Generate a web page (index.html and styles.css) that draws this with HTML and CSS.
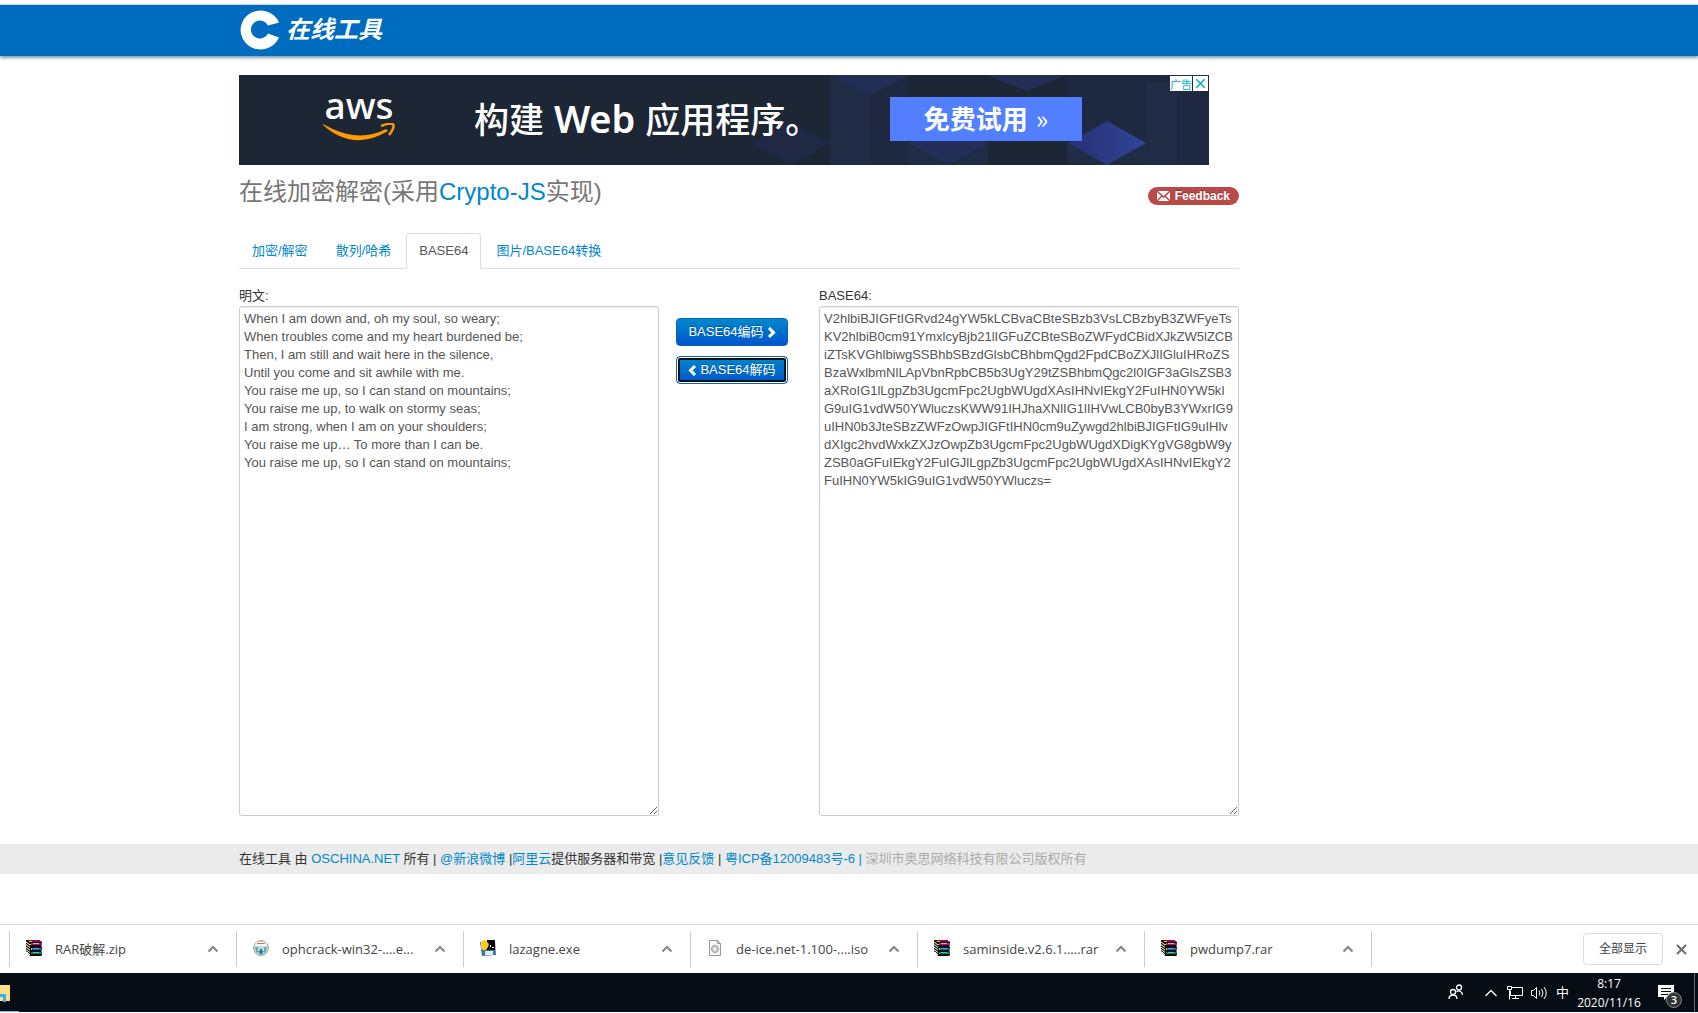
FILE: index.html
```html
<!DOCTYPE html>
<html lang="zh-CN">
<head>
<meta charset="utf-8">
<title>在线加密解密</title>
<link rel="stylesheet" href="styles.css">
</head>
<body>
<svg class="sprite" aria-hidden="true">
  <symbol id="rar" viewBox="0 0 16 16">
    <path fill="#111" d="M0 0h13l3 2v3l-1 1 1 1v3l-1 1 1 1v3l-1 1H4L0 11z"/>
    <path fill="#801040" d="M1 0h12l2 2H5z"/><path fill="#b01868" d="M5 3h11v2H5z"/><path fill="#e8a0c8" d="M7 3h6v1H7z"/>
    <path fill="#1460a8" d="M5 8h11v2H5z"/><path fill="#58a8e0" d="M7 8h6v1H7z"/>
    <path fill="#0e8058" d="M5 12h11v2H5z"/><path fill="#50c898" d="M7 12h6v1H7z"/>
    <path stroke="#fff" fill="none" d="M0 2l4 3M0 4.500l4 3M0 7l4 3M0 9.500l4 3M1 12l3 3"/>
    <path fill="#e8c020" d="M3 1h3v1H3zM4 4h1v1H4zM5 8h1v2H5z"/>
  </symbol>
  <symbol id="up" viewBox="0 0 12 8"><path d="M1.500 6.500L6 2l4.500 4.500" fill="none" stroke="currentColor" stroke-width="2"/></symbol>
</svg>

<header class="topbar">
  <div class="container">
    <a class="logo" href="#">
      <svg width="40" height="40" viewBox="0 0 40 40" aria-hidden="true"><path fill="#fff" d="M39 12.500A20 19.500 0 1 0 39 27.500L28 23.500A9 9 0 1 1 28 15.500z"/></svg>
      <span>在线工具</span>
    </a>
  </div>
</header>

<main class="container">
  <section class="ad">
    <svg class="ad-art" viewBox="0 0 970 90" preserveAspectRatio="none" aria-hidden="true">
      <defs>
        <linearGradient id="g1" x2="0" y2="1"><stop stop-color="#232f4d"/><stop offset="1" stop-color="#1e2a3d"/></linearGradient>
        <linearGradient id="g2" x2="1" y2="0"><stop stop-color="#272f73"/><stop offset="1" stop-color="#304595"/></linearGradient>
      </defs>
      <path fill="#1e2941" d="M591 0h79v90h-79zM828 0h80v68l-40-22-40 22zM908 0h62v90h-62z"/>
      <path fill="#202b45" d="M591 0h39v90h-39zM670 68h79v22h-79zM908 8h30v82h-30z"/>
      <path fill="#222e56" d="M591 0h79l-40 20zM748 0h80l-40 16zM925 0h45v8z"/>
      <path fill="#1f2944" d="M512 68l39-22 40 22-40 22z"/>
      <path fill="#242f59" d="M670 68l40-22 40 22-40 22z"/>
      <path fill="url(#g1)" d="M828 68l40 22h-40zM908 68l-40 22h40z"/>
      <path fill="url(#g2)" d="M829 68l39-22 39 22-39 22z"/>
    </svg>
    <div class="aws">
      <span>aws</span>
      <svg width="72" height="18" viewBox="0 0 72 18" aria-hidden="true"><path fill="#f90" d="M0 1Q34 21 63 6L65 8Q30 29 0 2z"/><path d="M58 3Q69-1 70.500 2Q71 6 66 12" fill="none" stroke="#f90" stroke-width="2.500"/></svg>
    </div>
    <strong class="slogan">构建 <b>Web</b> 应用程序。</strong>
    <a class="try" href="#">免费试用 <span>»</span></a>
    <div class="ad-choice"><a href="#">广告</a><button aria-label="关闭广告"><svg width="9" height="9" viewBox="0 0 9 9"><path d="M0 0l9 9M9 0L0 9" stroke="#00aecd" stroke-width="1.500"/></svg></button></div>
  </section>

  <div class="heading">
    <h1>在线加密解密(采用<a href="#">Crypto-JS</a>实现)</h1>
    <a class="feedback" href="#"><svg width="13" height="10" viewBox="0 0 13 10" aria-hidden="true"><path fill="#fff" d="M1 0h11L6.500 5zM0 1l4 4-4 4zM13 1L9 5l4 4zM5 6l1.500 1L8 6l4 4H1z"/></svg>Feedback</a>
  </div>

  <nav class="tabs">
    <a href="#">加密/解密</a>
    <a href="#">散列/哈希</a>
    <a class="active" href="#">BASE64</a>
    <a href="#">图片/BASE64转换</a>
  </nav>

  <form class="workspace">
    <div class="field">
      <label for="plain">明文:</label>
      <textarea id="plain" spellcheck="false">When I am down and, oh my soul, so weary;
When troubles come and my heart burdened be;
Then, I am still and wait here in the silence,
Until you come and sit awhile with me.
You raise me up, so I can stand on mountains;
You raise me up, to walk on stormy seas;
I am strong, when I am on your shoulders;
You raise me up… To more than I can be.
You raise me up, so I can stand on mountains;</textarea>
    </div>
    <div class="actions">
      <button type="button">BASE64编码 <svg width="9" height="11" viewBox="0 0 9 11" aria-hidden="true"><path d="M2 1l4.500 4.500L2 10" fill="none" stroke="#fff" stroke-width="3"/></svg></button>
      <button type="button" class="focused"><svg width="9" height="11" viewBox="0 0 9 11" aria-hidden="true"><path d="M7 1L2.500 5.500 7 10" fill="none" stroke="#fff" stroke-width="3"/></svg> BASE64解码</button>
    </div>
    <div class="field">
      <label for="code">BASE64:</label>
      <textarea id="code" spellcheck="false">V2hlbiBJIGFtIGRvd24gYW5kLCBvaCBteSBzb3VsLCBzbyB3ZWFyeTsKV2hlbiB0cm91YmxlcyBjb21lIGFuZCBteSBoZWFydCBidXJkZW5lZCBiZTsKVGhlbiwgSSBhbSBzdGlsbCBhbmQgd2FpdCBoZXJlIGluIHRoZSBzaWxlbmNlLApVbnRpbCB5b3UgY29tZSBhbmQgc2l0IGF3aGlsZSB3aXRoIG1lLgpZb3UgcmFpc2UgbWUgdXAsIHNvIEkgY2FuIHN0YW5kIG9uIG1vdW50YWluczsKWW91IHJhaXNlIG1lIHVwLCB0byB3YWxrIG9uIHN0b3JteSBzZWFzOwpJIGFtIHN0cm9uZywgd2hlbiBJIGFtIG9uIHlvdXIgc2hvdWxkZXJzOwpZb3UgcmFpc2UgbWUgdXDigKYgVG8gbW9yZSB0aGFuIEkgY2FuIGJlLgpZb3UgcmFpc2UgbWUgdXAsIHNvIEkgY2FuIHN0YW5kIG9uIG1vdW50YWluczs=</textarea>
    </div>
  </form>
</main>

<footer class="footer">
  <div class="container">在线工具 由 <a href="#">OSCHINA.NET</a> 所有 | <a href="#">@新浪微博</a> |<a href="#">阿里云</a>提供服务器和带宽 |<a href="#">意见反馈</a> | <a href="#">粤ICP备12009483号-6 |</a> <span class="owner">深圳市奥思网络科技有限公司版权所有</span></div>
</footer>

<section class="downloads">
  <ul>
    <li><svg class="ico"><use href="#rar"/></svg><span>RAR破解.zip</span><button aria-label="更多"><svg><use href="#up"/></svg></button></li>
    <li><svg class="ico" viewBox="0 0 16 16"><circle cx="8" cy="8" r="7.500" fill="#d4dcd8" stroke="#9aa8a4"/><path fill="#f6f2f0" d="M3 2h10l1 4H2z"/><path fill="#cc7468" d="M4 3h8v1H4z"/><path fill="#6cac9c" d="M2 7h12l-1 5-5 3-5-3z"/><path fill="#b8d8ec" d="M5 7h6v6H5z"/><path fill="#1c70c0" d="M7 9h2v2h2l-3 3-3-3h2z"/></svg><span>ophcrack-win32-....e...</span><button aria-label="更多"><svg><use href="#up"/></svg></button></li>
    <li><svg class="ico" viewBox="0 0 16 16"><path fill="#3878b0" d="M0 2l15-1 1 14-14 1z"/><path fill="#050505" d="M7 0h8v10H6z"/><path fill="#f8cc20" d="M1 2q4-4 6 0l2 2-1 3-2 3H3L1 8z"/><path fill="#e8e8e8" d="M5 11h8v4H5z"/><path fill="#fff" d="M10 5h1v2h-1zM12 7h2v1h-2z"/></svg><span>lazagne.exe</span><button aria-label="更多"><svg><use href="#up"/></svg></button></li>
    <li><svg class="ico" viewBox="0 0 16 16"><path fill="#f6f6f6" stroke="#999" d="M2.500.5h8l3 3v12h-11z"/><path fill="none" stroke="#999" d="M10.500.5v3h3"/><circle cx="8" cy="9" r="3.500" fill="#d4d4d4" stroke="#999"/><circle cx="8" cy="9" r="1" fill="#fff"/></svg><span>de-ice.net-1.100-....iso</span><button aria-label="更多"><svg><use href="#up"/></svg></button></li>
    <li><svg class="ico"><use href="#rar"/></svg><span>saminside.v2.6.1.....rar</span><button aria-label="更多"><svg><use href="#up"/></svg></button></li>
    <li><svg class="ico"><use href="#rar"/></svg><span>pwdump7.rar</span><button aria-label="更多"><svg><use href="#up"/></svg></button></li>
  </ul>
  <button class="show-all">全部显示</button>
  <button class="close" aria-label="关闭"><svg width="11" height="11" viewBox="0 0 11 11"><path d="M1 1l9 9M10 1l-9 9" stroke="#6b6e72" stroke-width="2"/></svg></button>
</section>

<div class="taskbar">
  <div class="folder"><svg width="10" height="17" viewBox="0 0 10 17" aria-hidden="true"><path fill="#ffe08a" d="M0 0h10v16H0z"/><path fill="#35b0ea" d="M0 9h6v8H3v-5H0z"/></svg></div>
  <div class="tray">
    <svg class="people" width="16" height="17" viewBox="0 0 16 17" fill="none" stroke="#fff" stroke-width="1.300"><circle cx="5" cy="8" r="2.500"/><path d="M1 15q0-4 4-4t4 4"/><circle cx="11" cy="3.500" r="2.500"/><path d="M8.500 8q2-2 4-.5 2 1 2 3.500"/></svg>
    <svg class="more" width="12" height="8" viewBox="0 0 12 8"><path d="M.5 7L6 1.500 11.500 7" fill="none" stroke="#fff" stroke-width="1.300"/></svg>
    <svg class="net" width="17" height="15" viewBox="0 0 17 15" fill="none" stroke="#fff"><path d="M5.500 2.500h11v8h-12v-5M1.500 1.500h4v3h-4zM3.500 4.500v10M6 13.500h7M9.500 10.500v3"/></svg>
    <svg class="vol" width="17" height="14" viewBox="0 0 17 14" fill="none" stroke="#fff"><path d="M.5 4.500h2l3-3v11l-3-3h-2zM8 4.500q2 2.500 0 5M10.500 3q3 4 0 8M13 1q4.500 6 0 12"/></svg>
    <span class="ime">中</span>
    <time><span>8:17</span><span>2020/11/16</span></time>
    <div class="notes"><svg width="16" height="16" viewBox="0 0 16 16" aria-hidden="true"><path fill="#fff" d="M0 0h16v12H9l-3 3v-3H0z"/><path stroke="#060c14" d="M3 3.500h10M3 6.500h10M3 9.500h7"/></svg><span class="count">3</span></div>
    <i class="edge"></i>
  </div>
</div>
</body>
</html>
```
FILE: styles.css
```css
* { box-sizing: border-box; }
body {
  margin: 0;
  padding-top: 4px;
  background: #fff;
  color: #333;
  font: 13px/18px "Liberation Sans", "Noto Sans CJK SC", sans-serif;
}
a { color: #08c; text-decoration: none; }
button { font: inherit; cursor: pointer; }
svg { display: block; flex: none; }
.sprite { display: none; }

.container {
  max-width: 1000px;
  margin-left: max(0px, calc(50% - 610px));
}

.topbar {
  height: 52px;
  border-top: 1px solid #ccd6de;
  background: #006cbf;
  box-shadow: 0 2px 3px rgba(0, 60, 100, .5);
}
.logo { display: flex; align-items: center; gap: 6px; padding: 5px 0 0 1px; }
.logo span { color: #fff; font-size: 24px; line-height: 40px; font-style: italic; font-weight: 700; }

.ad {
  position: relative;
  display: flex;
  align-items: flex-start;
  max-width: 970px;
  height: 90px;
  margin-top: 19px;
  background: #1d2635;
  color: #fff;
}
.ad > * { position: relative; flex: none; }
.ad .ad-art { position: absolute; inset: 0; width: 100%; height: 100%; }
.aws { width: 72px; margin: 14px 0 0 84px; text-align: center; }
.aws span { display: block; margin-bottom: 2px; font: 500 37px/32px "Noto Sans", sans-serif; }
.slogan { margin: 18px 0 0 79px; font: 500 35px/50px "Noto Sans CJK SC", sans-serif; }
.slogan b { margin: 0 2px; font: 600 38px/50px "Noto Sans", sans-serif; }
.try {
  display: flex;
  justify-content: center;
  gap: 8px;
  width: 192px;
  height: 44px;
  margin: 22px 127px 0 auto;
  background: #527fff;
  color: #fff;
  font: 700 26px/42px "Noto Sans CJK SC", sans-serif;
}
.try span { font-weight: 400; }
.ad .ad-choice { position: absolute; top: 1px; right: 1px; display: flex; gap: 1px; }
.ad-choice a, .ad-choice button {
  display: grid;
  place-items: center;
  height: 15px;
  padding: 0;
  border: 0;
  background: #fff;
  color: #00aecd;
  font-size: 11px;
}
.ad-choice a { width: 22px; }
.ad-choice button { width: 15px; }

.heading { display: flex; justify-content: space-between; align-items: center; height: 54px; }
h1 { margin: 0; color: #777; font-size: 24px; line-height: 36px; font-weight: 400; }
.feedback {
  display: flex;
  align-items: center;
  gap: 5px;
  margin-top: 8px;
  padding: 2px 9px;
  border-radius: 9px;
  background: #b94a48;
  color: #fff;
  font-size: 12px;
  line-height: 14px;
  font-weight: 700;
  text-shadow: 0 -1px 0 rgba(0, 0, 0, .25);
}

.tabs { display: flex; gap: 2px; margin-top: 14px; border-bottom: 1px solid #ddd; }
.tabs a {
  margin-bottom: -1px;
  padding: 8px 12px;
  border: 1px solid transparent;
  border-radius: 4px 4px 0 0;
}
.tabs .active { border-color: #ddd #ddd #fff; background: #fff; color: #555; }

.workspace { display: grid; grid-template-columns: 420px 1fr 420px; margin-top: 18px; }
.field label { display: block; height: 19px; }
.field textarea {
  display: block;
  width: 100%;
  height: 510px;
  padding: 3px 4px;
  border: 1px solid #ccc;
  border-radius: 3px;
  background: #fff;
  box-shadow: inset 0 1px 1px rgba(0, 0, 0, .075);
  color: #555;
  font: inherit;
  overflow: auto;
  outline: 0;
}
.actions { display: flex; flex-direction: column; align-items: flex-start; gap: 10px; padding: 31px 0 0 17px; }
.actions button {
  display: flex;
  align-items: center;
  justify-content: center;
  gap: 3px;
  width: 112px;
  height: 28px;
  padding: 0;
  border: 1px solid #0066c0;
  border-radius: 4px;
  background: linear-gradient(#08c, #05c);
  color: #fff;
  text-shadow: 0 -1px 0 rgba(0, 0, 0, .25);
}
.actions .focused { box-shadow: inset 0 0 0 1px #fff, inset 0 0 0 3px #101010; }

.footer { margin-top: 28px; padding: 6px 0; background: #ebebeb; }
.owner { color: #aaa; }

.downloads {
  display: flex;
  align-items: center;
  height: 49px;
  margin-top: 50px;
  border-top: 1px solid #dadce0;
  background: #fff;
  color: #444;
}
.downloads ul {
  display: flex;
  margin: 0 auto 0 9px;
  padding: 0;
  border-left: 1px solid #ccc;
  list-style: none;
  font: 13px/18px "Open Sans", "Noto Sans CJK SC", sans-serif;
}
.downloads li { display: flex; align-items: center; width: 227px; height: 36px; padding: 0 17px 0 16px; border-right: 1px solid #ccc; }
.downloads li span { flex: 1; margin-left: 13px; white-space: nowrap; }
.ico { width: 16px; height: 16px; margin-bottom: 2px; }
.downloads li button { padding: 0; border: 0; background: none; color: #80868b; }
.downloads li button svg { width: 12px; height: 8px; }
.show-all { width: 80px; height: 32px; padding: 0; border: 1px solid #dadce0; border-radius: 4px; background: #fff; color: #3c4043; font-size: 12px; }
.close { margin: 0 11px 0 13px; padding: 0; border: 0; background: none; }

.taskbar { display: flex; justify-content: space-between; height: 39px; overflow: hidden; background: #060c14; color: #fff; }
.folder { width: 19px; padding-top: 12px; border-bottom: 1px solid #76b9ed; }
.tray { display: flex; align-items: center; }
.more { margin-left: 21px; }
.net { margin-left: 9px; }
.vol { margin-left: 8px; }
.ime { margin-left: 8px; font-size: 13px; }
time { display: flex; flex-direction: column; align-items: center; width: 68px; margin-left: 6px; font: 12px/19px "Open Sans", sans-serif; }
.notes { position: relative; margin-left: 15px; }
.count {
  position: absolute;
  left: 8px;
  top: 7px;
  width: 16px;
  height: 16px;
  border: 1px solid #888;
  border-radius: 50%;
  background: #333;
  font: 600 11px/14px "Open Sans", sans-serif;
  text-align: center;
}
.edge { align-self: stretch; width: 1px; margin: 0 3px 0 20px; background: #667; }
```
